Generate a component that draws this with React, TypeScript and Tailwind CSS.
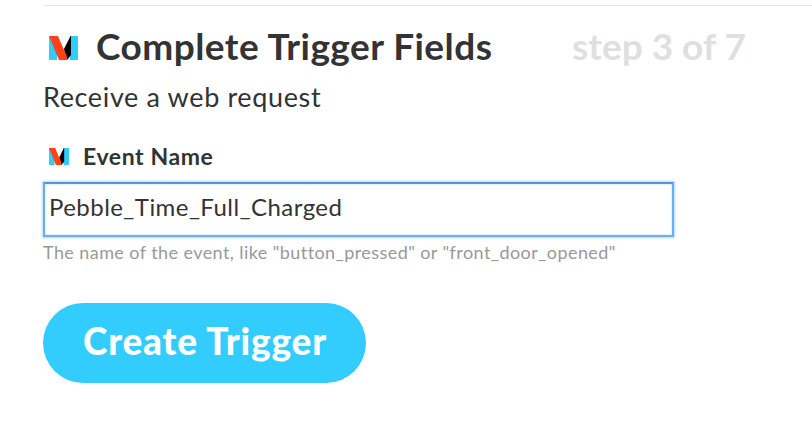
function ChannelIcon({ className }: { className: string }) {
  return (
    <svg viewBox="0 0 29 24" preserveAspectRatio="none" className={className} aria-hidden="true">
      <path d="M0 0H8V24H0Z" fill="#3cf" />
      <path d="M21 0H29V24H21Z" fill="#3cf" />
      <path d="M21.500 0L15 13L17 24H18L22 19V0Z" fill="#000" />
      <path d="M0 0H9L15 14L17.500 19L18.500 24H10Z" fill="#ff4218" />
    </svg>
  );
}

export default function App() {
  return (
    <main className="h-[426px] w-[812px] overflow-hidden bg-white pl-[43px] pt-[5px] font-['Lato',sans-serif] text-[#333]">
      <div className="h-px bg-[#e6e6e6]" />
      <header className="mt-4 flex h-12 items-center whitespace-nowrap text-[37px] font-bold leading-[48px]">
        <ChannelIcon className="ml-[6px] mt-[4px] h-[24px] w-[29px] shrink-0" />
        <h1 className="ml-[18px] w-[476px] tracking-[0.45px]">Complete Trigger Fields</h1>
        <span className="text-[#dfdfdf]">step 3 of 7</span>
      </header>
      <p className="mt-[9px] h-9 text-[27px] leading-9 tracking-[0.64px]">Receive a web request</p>
      <label htmlFor="event" className="mt-[27px] flex h-7 items-center text-[23px] font-bold leading-7">
        <ChannelIcon className="ml-[6px] h-[17px] w-[20px]" />
        <span className="ml-[14px] tracking-[0.6px]">Event Name</span>
      </label>
      <input
        id="event"
        type="text"
        defaultValue="Pebble_Time_Full_Charged"
        className="mt-[12px] block h-[55px] w-[631px] border-2 border-[#6daef2] border-t-[#5596d9] pb-[6px] pl-[4px] text-[24px] tracking-[0.45px] shadow-[0_0_2px_1px_#b5d8fd,inset_0_0_1px_1px_#e0effe] outline-none"
      />
      <p className="mt-[3px] h-6 text-[18px] leading-6 tracking-[0.42px] text-[#999]">
        The name of the event, like "button_pressed" or "front_door_opened"
      </p>
      <button className="mt-[39px] block h-20 w-[323px] rounded-full bg-[#3cf] pb-[4px] pl-px text-[37px] font-black tracking-[0.8px] text-white">
        Create Trigger
      </button>
    </main>
  );
}
